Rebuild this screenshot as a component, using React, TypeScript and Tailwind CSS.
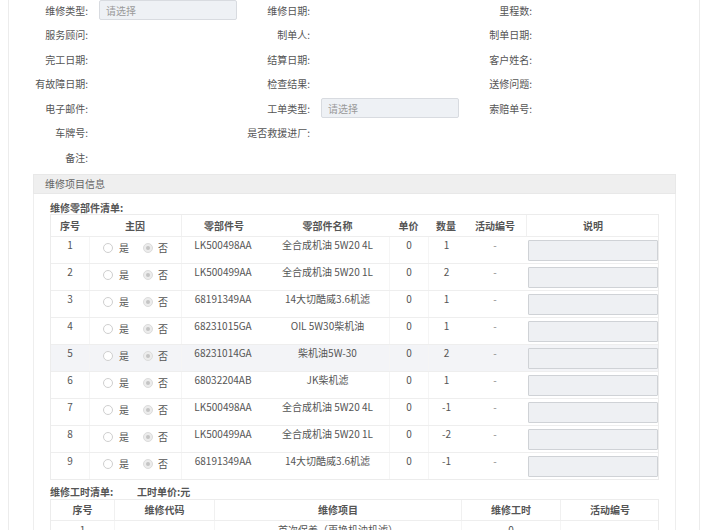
import React from 'react';

const formRows: [string, boolean, string, boolean, string][] = [
  ['维修类型:', true, '维修日期:', false, '里程数:'],
  ['服务顾问:', false, '制单人:', false, '制单日期:'],
  ['完工日期:', false, '结算日期:', false, '客户姓名:'],
  ['有故障日期:', false, '检查结果:', false, '送修问题:'],
  ['电子邮件:', false, '工单类型:', true, '索赔单号:'],
  ['车牌号:', false, '是否救援进厂:', false, ''],
  ['备注:', false, '', false, ''],
];

const parts = [
  ['1', 'LK500498AA', '全合成机油 5W20 4L', '0', '1'],
  ['2', 'LK500499AA', '全合成机油 5W20 1L', '0', '2'],
  ['3', '68191349AA', '14大切酷威3.6机滤', '0', '1'],
  ['4', '68231015GA', 'OIL 5W30柴机油', '0', '1'],
  ['5', '68231014GA', '柴机油5W-30', '0', '2'],
  ['6', '68032204AB', 'JK柴机滤', '0', '1'],
  ['7', 'LK500498AA', '全合成机油 5W20 4L', '0', '-1'],
  ['8', 'LK500499AA', '全合成机油 5W20 1L', '0', '-2'],
  ['9', '68191349AA', '14大切酷威3.6机滤', '0', '-1'],
];

function Select() {
  return (
    <div className="ml-[11px] w-[138px] h-[20px] shrink-0 border border-[#d8dbe0] bg-[#eef1f5] rounded-[2px] pl-[6px] flex items-center text-[#9a9a9a]">
      请选择
    </div>
  );
}

function Field({ label, select }: { label: string; select: boolean }) {
  return (
    <div className="flex items-center w-[222px] h-[24.5px]">
      <div className="w-[79px] shrink-0 text-right">{label}</div>
      {select && <Select />}
    </div>
  );
}

function Radio({ checked }: { checked?: boolean }) {
  if (checked) {
    return (
      <span className="inline-flex w-[10px] h-[10px] rounded-full border border-[#dcdcdc] bg-[#ececec] items-center justify-center">
        <span className="w-[4px] h-[4px] rounded-full bg-[#c4c4c4]" />
      </span>
    );
  }
  return <span className="inline-block w-[10px] h-[10px] rounded-full border border-[#cfcfcf] bg-white" />;
}

const partCols = 'grid grid-cols-[38px_92px_85px_123px_39px_36px_62px_133px]';
const laborCols = 'grid grid-cols-[63px_100px_247px_99px_99px]';

export default function App() {
  return (
    <div className="w-[707px] h-[530px] overflow-hidden bg-white font-['Noto_Sans_CJK_SC','Noto_Sans',sans-serif] text-[10px] text-[#555]">
      <div className="ml-[8px] w-[692px] h-[560px] border-x border-[#ececec]">
        <div className="mt-[-2px]">
          {formRows.map((r, i) => (
            <div key={i} className="flex">
              <Field label={r[0]} select={r[1]} />
              <Field label={r[2]} select={r[3]} />
              <Field label={r[4]} select={false} />
            </div>
          ))}
        </div>
        <div className="ml-[24px] w-[643px] mt-[4px]">
          <div className="h-[20px] bg-[#efefef] border border-[#e8e8e8] flex items-center pl-[11px] text-[#666]">维修项目信息</div>
          <div className="border-x border-[#eeeeee] pl-[16px] pr-[17px]">
            <div className="pt-[7px] h-[20px] font-bold leading-[14px]">维修零部件清单:</div>
            <div className="border border-[#ececec] w-[609px]">
              <div className={`${partCols} h-[21px] items-center text-center font-bold`}>
                <div>序号</div>
                <div>主因</div>
                <div className="border-l border-[#f0f0f0] h-full flex items-center justify-center">零部件号</div>
                <div>零部件名称</div>
                <div>单价</div>
                <div>数量</div>
                <div>活动编号</div>
                <div className="border-l border-[#f0f0f0] h-full flex items-center justify-center">说明</div>
              </div>
              {parts.map((p, i) => (
                <div
                  key={i}
                  className={`${partCols} h-[27px] border-t border-[#eeeeee] text-center leading-[14px] ${i === 4 ? 'bg-[#f3f4f7]' : ''}`}
                >
                  <div className="pt-[1px]">{p[0]}</div>
                  <div className="border-l border-[#f5f5f5] pt-[4px] flex justify-center items-start">
                    <span className="flex items-center gap-[6px]"><Radio /><span>是</span></span>
                    <span className="flex items-center gap-[5px] ml-[14px]"><Radio checked /><span>否</span></span>
                  </div>
                  <div className="border-l border-[#f5f5f5] pt-[1px] pr-[2px]">{p[1]}</div>
                  <div className="pt-[1px]">{p[2]}</div>
                  <div className="border-l border-[#f5f5f5] pt-[1px]">{p[3]}</div>
                  <div className="border-l border-[#f5f5f5] pt-[1px]">{p[4]}</div>
                  <div className="pt-[1px] text-[#888]">-</div>
                  <div className="pt-[3px] pl-[2px]">
                    <div className="w-[130px] h-[21px] border border-[#cfd2d6] bg-[#eef0f3] rounded-[1px]" />
                  </div>
                </div>
              ))}
            </div>
            <div className="mt-[5px] h-[14px] leading-[14px] font-bold flex">
              <span className="w-[87px]">维修工时清单:</span>
              <span>工时单价:元</span>
            </div>
            <div className="border border-[#ececec] w-[609px]">
              <div className={`${laborCols} h-[20px] items-center text-center font-bold`}>
                <div>序号</div>
                <div className="border-l border-[#f0f0f0] h-full flex items-center justify-center">维修代码</div>
                <div className="border-l border-[#f0f0f0] h-full flex items-center justify-center">维修项目</div>
                <div className="border-l border-[#f0f0f0] h-full flex items-center justify-center">维修工时</div>
                <div className="border-l border-[#f0f0f0] h-full flex items-center justify-center">活动编号</div>
              </div>
              <div className={`${laborCols} h-[27px] border-t border-[#eeeeee] text-center leading-[14px]`}>
                <div className="pt-[2px]">1</div>
                <div className="border-l border-[#f5f5f5] pt-[2px]"></div>
                <div className="border-l border-[#f5f5f5] pt-[2px]">首次保养（更换机油机滤）</div>
                <div className="border-l border-[#f5f5f5] pt-[2px]">0</div>
                <div className="border-l border-[#f5f5f5] pt-[2px]">-</div>
              </div>
            </div>
          </div>
        </div>
      </div>
    </div>
  );
}
